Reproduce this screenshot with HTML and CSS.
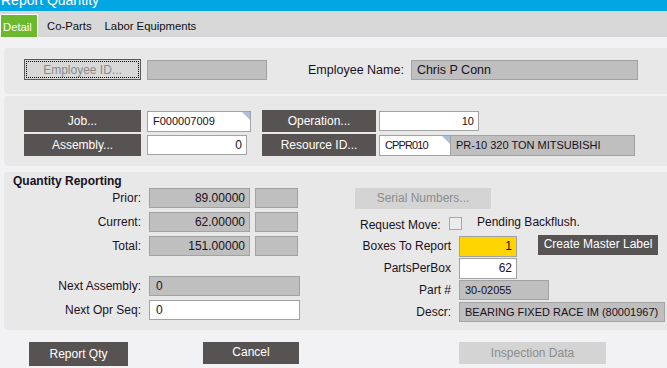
FILE: index.html
```html
<!DOCTYPE html>
<html>
<head>
<meta charset="utf-8">
<link rel="stylesheet" href="styles.css">
</head>
<body>
<div class="titlebar"><span class="title">Report Quantity</span></div>
<div class="tabbar">
  <div class="tab active">Detail</div>
  <div class="tab">Co-Parts</div>
  <div class="tab">Labor Equipments</div>
</div>
<div class="content">
  <div class="panel p1">
    <div class="btn-light">Employee ID...</div>
    <div class="inp gray w120"></div>
    <div class="lbl emp-lbl">Employee Name:</div>
    <div class="inp gray w227 big">Chris P Conn</div>
  </div>
  <div class="panel p2">
    <div class="row">
      <div class="btn-dark w117">Job...</div>
      <div class="inp white w104 corner sm">F000007009</div>
      <div class="btn-dark w114 ml11">Operation...</div>
      <div class="inp white w100 right sm">10</div>
    </div>
    <div class="row">
      <div class="btn-dark w117">Assembly...</div>
      <div class="inp white w100 right">0</div>
      <div class="btn-dark w114 ml15">Resource ID...</div>
      <div class="inp white w72 corner xs">CPPR010</div>
      <div class="inp gray w184 nol sm">PR-10 320 TON MITSUBISHI</div>
    </div>
  </div>
  <div class="panel p3">
    <div class="left">
      <div class="heading">Quantity Reporting</div>
      <div class="qrow"><span class="ql">Prior:</span><div class="inp gray w101 right">89.00000</div><div class="inp gray box"></div></div>
      <div class="qrow"><span class="ql">Current:</span><div class="inp gray w101 right">62.00000</div><div class="inp gray box"></div></div>
      <div class="qrow"><span class="ql">Total:</span><div class="inp gray w101 right">151.00000</div><div class="inp gray box"></div></div>
      <div class="qrow first2"><span class="ql">Next Assembly:</span><div class="inp gray w151">0</div></div>
      <div class="qrow"><span class="ql">Next Opr Seq:</span><div class="inp white w151">0</div></div>
    </div>
    <div class="rightcol">
      <div class="btn-disabled serial">Serial Numbers...</div>
      <div class="rm-row"><span class="rm-lbl">Request Move:</span><span class="chk"></span><span class="pend">Pending Backflush.</span></div>
      <div class="rrow"><span class="rl">Boxes To Report</span><div class="inp yellow w58 right">1</div><div class="btn-dark cml">Create Master Label</div></div>
      <div class="rrow"><span class="rl">PartsPerBox</span><div class="inp white w58 right">62</div></div>
      <div class="rrow"><span class="rl">Part #</span><div class="inp gray w90 sm">30-02055</div></div>
      <div class="rrow"><span class="rl">Descr:</span><div class="inp gray w206 sm">BEARING FIXED RACE IM (80001967)</div></div>
    </div>
  </div>
  <div class="footer">
    <div class="btn-dark fb1">Report Qty</div>
    <div class="btn-dark fb2">Cancel</div>
    <div class="btn-disabled fb3">Inspection Data</div>
  </div>
</div>
</body>
</html>
```
FILE: styles.css
```css
* { box-sizing: border-box; }
html, body { margin: 0; padding: 0; }
body {
  width: 667px; height: 368px; overflow: hidden;
  font-family: "Liberation Sans", Arial, sans-serif;
  font-size: 12px; color: #1a1020;
  background: #f2f2f4;
}
.titlebar { height: 11px; background: #00a6e2; overflow: hidden; }
.title { display: block; color: #fff; font-size: 14px; line-height: 14px; margin-top: -7px; padding-left: 1px; }
.tabbar { height: 26px; background: #d8d8d8; display: flex; align-items: flex-end; }
.tab { font-size: 11.3px; padding: 0 4px; height: 23px; line-height: 25px; color: #101010; }
.tab.active { background: #6cb82e; color: #fff; border: 1px solid #fff; border-bottom: 0; border-radius: 2px 2px 0 0; width: 38px; padding: 0 2px; margin-right: 5px; line-height: 24px; }
.tab:nth-child(3) { margin-left: 5px; }
.content { padding: 11px 0 0 4px; }
.panel { background: #e8e8e8; border-radius: 4px 0 0 4px; }
.p1 { height: 46px; display: flex; align-items: flex-start; padding: 11px 0 0 20px; }
.p2 { height: 70px; margin-top: 2px; padding: 14px 0 0 20px; }
.p3 { height: 158px; margin-top: 6px; display: flex; }
.row { display: flex; height: 22px; margin-bottom: 2px; align-items: flex-start; }
.inp { height: 20px; border: 1px solid #a2a2a2; padding: 0 5px; line-height: 18px; white-space: nowrap; overflow: hidden; position: relative; }
.sm { font-size: 11px; }
.xs { font-size: 11px; letter-spacing: -0.9px; }
.big { font-size: 12.5px; }
.gray { background: #bfbfbf; }
.white { background: #fff; }
.yellow { background: #ffd500; }
.right { text-align: right; padding-right: 4px; }
.corner::after { content: ""; position: absolute; right: 0; top: 0; border-top: 8px solid #a9c0d8; border-left: 8px solid transparent; }
.btn-dark { background: #575352; color: #fff; height: 22px; line-height: 23px; text-align: center; }
.btn-light { width: 117px; height: 21px; background: #d8d8d8; border: 1px solid #5a5a5a; color: #8a8a8a; text-align: center; line-height: 20px; position: relative; }
.btn-light::before { content: ""; position: absolute; inset: 1px; border: 1px dotted #000; }
.btn-disabled { background: #d4d4d4; color: #8c8c8c; text-align: center; height: 22px; line-height: 22px; }
.w117 { width: 117px; margin-right: 6px; }
.w114 { width: 114px; margin-right: 3px; }
.ml11 { margin-left: 11px; }
.ml15 { margin-left: 15px; }
.w120 { width: 120px; margin-left: 6px; margin-top: 1px; }
.w227 { width: 227px; margin-top: 1px; }
.emp-lbl { margin-left: 41px; margin-right: 7px; margin-top: 4px; font-size: 12.5px; }
.w104 { width: 104px; height: 21px; margin-top: 1px; }
.w100 { width: 100px; margin-top: 1px; }
.w72 { width: 72px; height: 21px; margin-top: 1px; }
.w184 { width: 184px; margin-top: 1px; border-left: 0; height: 21px; }
.left { width: 340px; }
.heading { font-weight: bold; font-size: 12px; padding: 2px 0 0 9px; height: 16px; line-height: 14px; }
.qrow { display: flex; align-items: center; height: 20px; margin-bottom: 4px; }
.ql { width: 137px; text-align: right; margin-right: 8px; }
.w101 { width: 101px; }
.box { width: 43px; height: 20px; margin-left: 5px; }
.first2 { margin-top: 20px; }
.w151 { width: 151px; padding-left: 6px; }
.rightcol { padding-top: 16px; margin-left: 11px; }
.serial { width: 136px; height: 21px; line-height: 20px; }
.rm-row { display: flex; align-items: flex-start; height: 27px; padding-top: 8px; }
.rm-lbl { margin-left: 5px; margin-top: 1px; width: 89px; }
.chk { width: 13px; height: 13px; border: 1px solid #a8a8a8; background: #ececec; margin-top: 0px; }
.pend { margin-left: 15px; margin-top: -2px; }
.rrow { display: flex; align-items: flex-start; height: 22px; }
.rl { width: 96px; text-align: right; margin-right: 8px; margin-top: 3px; }
.w58 { width: 58px; height: 21px; }
.w90 { width: 90px; }
.w206 { width: 206px; }
.cml { width: 120px; height: 20px; line-height: 19px; margin-left: 21px; margin-top: -1px; }
.footer { display: flex; padding-top: 12px; }
.fb1 { width: 99px; height: 24px; line-height: 24px; margin-left: 25px; }
.fb2 { width: 96px; height: 22px; line-height: 20px; margin-left: 75px; }
.fb3 { width: 147px; height: 22px; margin-left: 160px; }
```
